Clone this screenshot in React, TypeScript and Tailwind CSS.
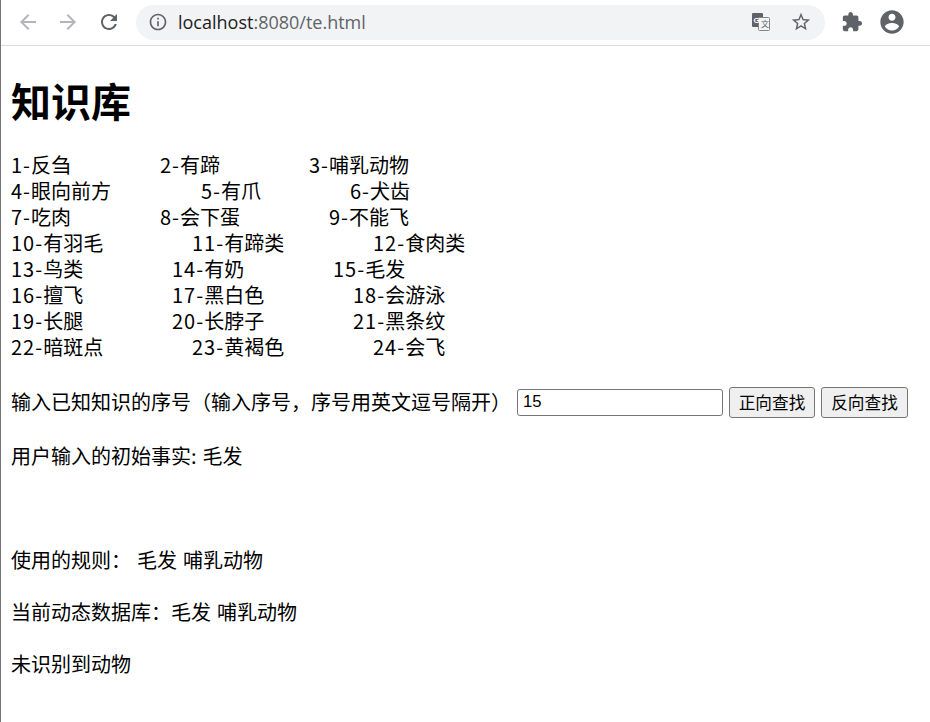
const font = '[font-family:"Noto_Sans_CJK_SC","Liberation_Sans",sans-serif]'

const rows = [
  { a: '1-反刍', aw: 'w-[149px]', b: '2-有蹄', bw: 'w-[149px]', c: '3-哺乳动物' },
  { a: '4-眼向前方', aw: 'w-[190px]', b: '5-有爪', bw: 'w-[149px]', c: '6-犬齿' },
  { a: '7-吃肉', aw: 'w-[149px]', b: '8-会下蛋', bw: 'w-[169px]', c: '9-不能飞' },
  { a: '10-有羽毛', aw: 'w-[181px]', b: '11-有蹄类', bw: 'w-[181px]', c: '12-食肉类' },
  { a: '13-鸟类', aw: 'w-[161px]', b: '14-有奶', bw: 'w-[161px]', c: '15-毛发' },
  { a: '16-擅飞', aw: 'w-[161px]', b: '17-黑白色', bw: 'w-[181px]', c: '18-会游泳' },
  { a: '19-长腿', aw: 'w-[161px]', b: '20-长脖子', bw: 'w-[181px]', c: '21-黑条纹' },
  { a: '22-暗斑点', aw: 'w-[181px]', b: '23-黄褐色', bw: 'w-[181px]', c: '24-会飞' },
]

function Icon({ d, className }: { d: string; className: string }) {
  return (
    <svg viewBox="0 0 24 24" className={className} fill="currentColor">
      <path d={d} />
    </svg>
  )
}

// the number and dash run a bit wider than the CJK font's own
function Fact({ text, className }: { text: string; className?: string }) {
  const [num, name] = text.split('-')
  return (
    <span className={className}>
      <span className="tracking-[1px]">{num}-</span>
      {name}
    </span>
  )
}

function Toolbar() {
  return (
    <div className="flex h-[46px] shrink-0 items-center border-b border-[#dadce0] bg-white pb-[1px]">
      <div className="flex w-[135px] shrink-0 items-center pl-[15px]">
        <Icon
          className="h-6 w-6 text-[#b3b5b8]"
          d="M20 11H7.83l5.59-5.59L12 4l-8 8 8 8 1.41-1.41L7.83 13H20v-2z"
        />
        <Icon
          className="ml-[16px] h-6 w-6 text-[#b3b5b8]"
          d="M12 4l-1.41 1.41L16.17 11H4v2h12.17l-5.58 5.59L12 20l8-8z"
        />
        <Icon
          className="ml-[17px] h-6 w-6 text-[#5f6368]"
          d="M17.65 6.35C16.2 4.9 14.21 4 12 4c-4.42 0-7.99 3.58-7.99 8s3.57 8 7.99 8c3.73 0 6.84-2.55 7.73-6h-2.08c-.82 2.33-3.04 4-5.65 4-3.31 0-6-2.69-6-6s2.69-6 6-6c1.66 0 3.14.69 4.22 1.78L13 11h7V4l-2.35 2.35z"
        />
      </div>

      <div className="flex h-[35px] w-[689px] shrink-0 items-center rounded-full bg-[#f1f3f4] pl-[12px]">
        <Icon
          className="h-[20px] w-[20px] text-[#5f6368]"
          d="M11 7h2v2h-2zm0 4h2v6h-2zm1-9C6.48 2 2 6.48 2 12s4.48 10 10 10 10-4.48 10-10S17.52 2 12 2zm0 18c-4.41 0-8-3.59-8-8s3.59-8 8-8 8 3.59 8 8-3.59 8-8 8z"
        />
        <span className="ml-[10px] font-['Open_Sans',sans-serif] text-[18px] text-[#5f6368]">
          <span className="text-[#202124]">localhost</span>:8080/te.html
        </span>
        <div className="flex-1" />
        <svg viewBox="0 0 20 20" className="h-[20px] w-[20px]">
          <rect x="1" y="1" width="11" height="14" rx="1" fill="#5f6368" />
          <rect x="7.5" y="5.5" width="11" height="13" rx="1" fill="#f1f3f4" stroke="#80868b" />
          <text x="2.5" y="11" fontSize="8" fontWeight="700" fill="#fff" fontFamily="Liberation Sans">G</text>
          <text x="10" y="15" fontSize="8" fill="#5f6368" fontFamily="Noto Sans CJK SC">文</text>
        </svg>
        <Icon
          className="ml-[19px] mr-[13px] h-[22px] w-[22px] text-[#5f6368]"
          d="M22 9.24l-7.19-.62L12 2 9.19 8.63 2 9.24l5.46 4.73L5.82 21 12 17.27 18.18 21l-1.63-7.03L22 9.24zM12 15.4l-3.76 2.27 1-4.28-3.32-2.88 4.38-.38L12 6.1l1.71 4.04 4.38.38-3.32 2.88 1 4.28L12 15.4z"
        />
      </div>

      <Icon
        className="ml-[16px] h-[22px] w-[22px] text-[#5f6368]"
        d="M20.5 11H19V7c0-1.1-.9-2-2-2h-4V3.5C13 2.12 11.88 1 10.5 1S8 2.12 8 3.5V5H4c-1.1 0-1.99.9-1.99 2v3.8H3.5c1.49 0 2.7 1.21 2.7 2.7s-1.21 2.7-2.7 2.7H2V20c0 1.1.9 2 2 2h3.8v-1.5c0-1.49 1.21-2.7 2.7-2.7 1.49 0 2.7 1.21 2.7 2.7V22H17c1.1 0 2-.9 2-2v-4h1.5c1.38 0 2.5-1.12 2.5-2.5S21.88 11 20.5 11z"
      />
      <Icon
        className="ml-[15px] h-[28px] w-[28px] text-[#5f6368]"
        d="M12 2C6.48 2 2 6.48 2 12s4.48 10 10 10 10-4.48 10-10S17.52 2 12 2zm0 3c1.66 0 3 1.34 3 3s-1.34 3-3 3-3-1.34-3-3 1.34-3 3-3zm0 14.2c-2.5 0-4.71-1.28-6-3.22.03-1.99 4-3.08 6-3.08 1.99 0 5.97 1.09 6 3.08-1.29 1.94-3.5 3.22-6 3.22z"
      />
    </div>
  )
}

export default function App() {
  return (
    <div className={`h-[722px] w-[930px] overflow-hidden border-l border-[#767676] bg-white text-black ${font}`}>
      <Toolbar />

      <div className="pl-[10px] text-[20px] leading-[26px] [word-spacing:1.5px]">
        <h1 className="mt-[25px] h-[58px] text-[40px] leading-[58px] font-bold">知识库</h1>

        <div className="mt-[23px]">
          {rows.map((r) => (
            <div key={r.a} className="flex h-[26px]">
              <Fact text={r.a} className={r.aw} />
              <Fact text={r.b} className={r.bw} />
              <Fact text={r.c} />
            </div>
          ))}
        </div>

        <form className="mt-[26px] flex h-[32px] items-center">
          <span className="w-[506px]">输入已知知识的序号（输入序号，序号用英文逗号隔开）</span>
          <input
            defaultValue="15"
            className="box-border h-[27px] w-[206px] rounded-[3px] border border-[#767676] bg-white px-[5px] font-['Liberation_Sans',sans-serif] text-[16.67px] outline-none"
          />
          <button
            type="button"
            className="ml-[6px] h-[31px] w-[86px] rounded-[3px] border border-[#767676] bg-[#efefef] text-center text-[16.67px] leading-[29px]"
          >
            正向查找
          </button>
          <button
            type="button"
            className="ml-[6px] h-[31px] w-[87px] rounded-[3px] border border-[#767676] bg-[#efefef] text-center text-[16.67px] leading-[29px]"
          >
            反向查找
          </button>
        </form>

        <p className="mt-[25px]">用户输入的初始事实: 毛发</p>
        <p className="mt-[78px]">使用的规则： 毛发 哺乳动物</p>
        <p className="mt-[26px]">当前动态数据库：毛发 哺乳动物</p>
        <p className="mt-[26px]">未识别到动物</p>
      </div>
    </div>
  )
}
